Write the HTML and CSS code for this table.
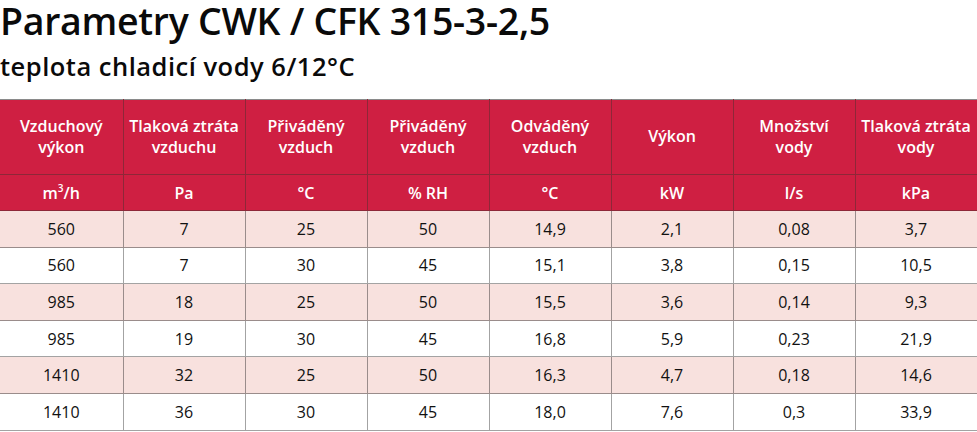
FILE: index.html
```html
<!DOCTYPE html>
<html lang="cs">
<head>
<meta charset="utf-8">
<title>Parametry CWK / CFK 315-3-2,5</title>
<link rel="stylesheet" href="styles.css">
</head>
<body>
<h1 class="title">Parametry CWK / CFK 315-3-2,5</h1>
<h2 class="subtitle">teplota chladicí vody 6/12°C</h2>
<table class="params">
  <colgroup>
    <col class="c-first"><col><col><col><col><col><col><col>
  </colgroup>
  <thead>
    <tr class="head">
      <th>Vzduchový<br>výkon</th>
      <th>Tlaková ztráta<br>vzduchu</th>
      <th>Přiváděný<br>vzduch</th>
      <th>Přiváděný<br>vzduch</th>
      <th>Odváděný<br>vzduch</th>
      <th>Výkon</th>
      <th>Množství<br>vody</th>
      <th>Tlaková ztráta<br>vody</th>
    </tr>
    <tr class="units">
      <th>m<sup>3</sup>/h</th>
      <th>Pa</th>
      <th>°C</th>
      <th>% RH</th>
      <th>°C</th>
      <th>kW</th>
      <th>l/s</th>
      <th>kPa</th>
    </tr>
  </thead>
  <tbody>
    <tr class="odd"><td>560</td><td>7</td><td>25</td><td>50</td><td>14,9</td><td>2,1</td><td>0,08</td><td>3,7</td></tr>
    <tr class="even"><td>560</td><td>7</td><td>30</td><td>45</td><td>15,1</td><td>3,8</td><td>0,15</td><td>10,5</td></tr>
    <tr class="odd"><td>985</td><td>18</td><td>25</td><td>50</td><td>15,5</td><td>3,6</td><td>0,14</td><td>9,3</td></tr>
    <tr class="even"><td>985</td><td>19</td><td>30</td><td>45</td><td>16,8</td><td>5,9</td><td>0,23</td><td>21,9</td></tr>
    <tr class="odd"><td>1410</td><td>32</td><td>25</td><td>50</td><td>16,3</td><td>4,7</td><td>0,18</td><td>14,6</td></tr>
    <tr class="even"><td>1410</td><td>36</td><td>30</td><td>45</td><td>18,0</td><td>7,6</td><td>0,3</td><td>33,9</td></tr>
  </tbody>
</table>
</body>
</html>
```
FILE: styles.css
```css
html, body {
  margin: 0;
  padding: 0;
  background: #ffffff;
}

body {
  font-family: "Open Sans", "Liberation Sans", sans-serif;
  color: #000000;
}

.title {
  margin: 0;
  font-size: 37.5px;
  line-height: 41px;
  font-weight: 600;
  letter-spacing: -0.3px;
  color: #0a0a0a;
  white-space: nowrap;
}

.subtitle {
  margin: 10px 0 0;
  font-size: 25.5px;
  line-height: 30px;
  font-weight: 600;
  letter-spacing: 0.5px;
  color: #0a0a0a;
  white-space: nowrap;
}

.params {
  margin-top: 18px;
  width: 976px;
  border-collapse: collapse;
  table-layout: fixed;
}

.params col {
  width: 122px;
}

.params col.c-first {
  width: 123px;
}

.params th,
.params td {
  padding: 0;
  text-align: center;
  vertical-align: middle;
  border: 1px solid #a3a3a3;
}

.params tr > :first-child {
  border-left: none;
}

.params th {
  background: #cf1f42;
  color: #ffffff;
  font-weight: 600;
  font-size: 16px;
  line-height: 21px;
  letter-spacing: 0;
  border-color: #8e2738;
}

.params tr.head th {
  height: 73px;
  padding-bottom: 1px;
  border-top-color: #8a8a8a;
}

.params tr.units th {
  height: 33px;
  padding-top: 2px;
}

.params sup {
  font-size: 10px;
  line-height: 0;
  vertical-align: 7px;
}

.params td {
  height: 35.6px;
  font-size: 16px;
  font-weight: 400;
  color: #111111;
}

.params tr.odd td {
  background: #f8e1de;
  border-color: #9a8c8b;
}

.params tr.even td {
  background: #ffffff;
}
```
